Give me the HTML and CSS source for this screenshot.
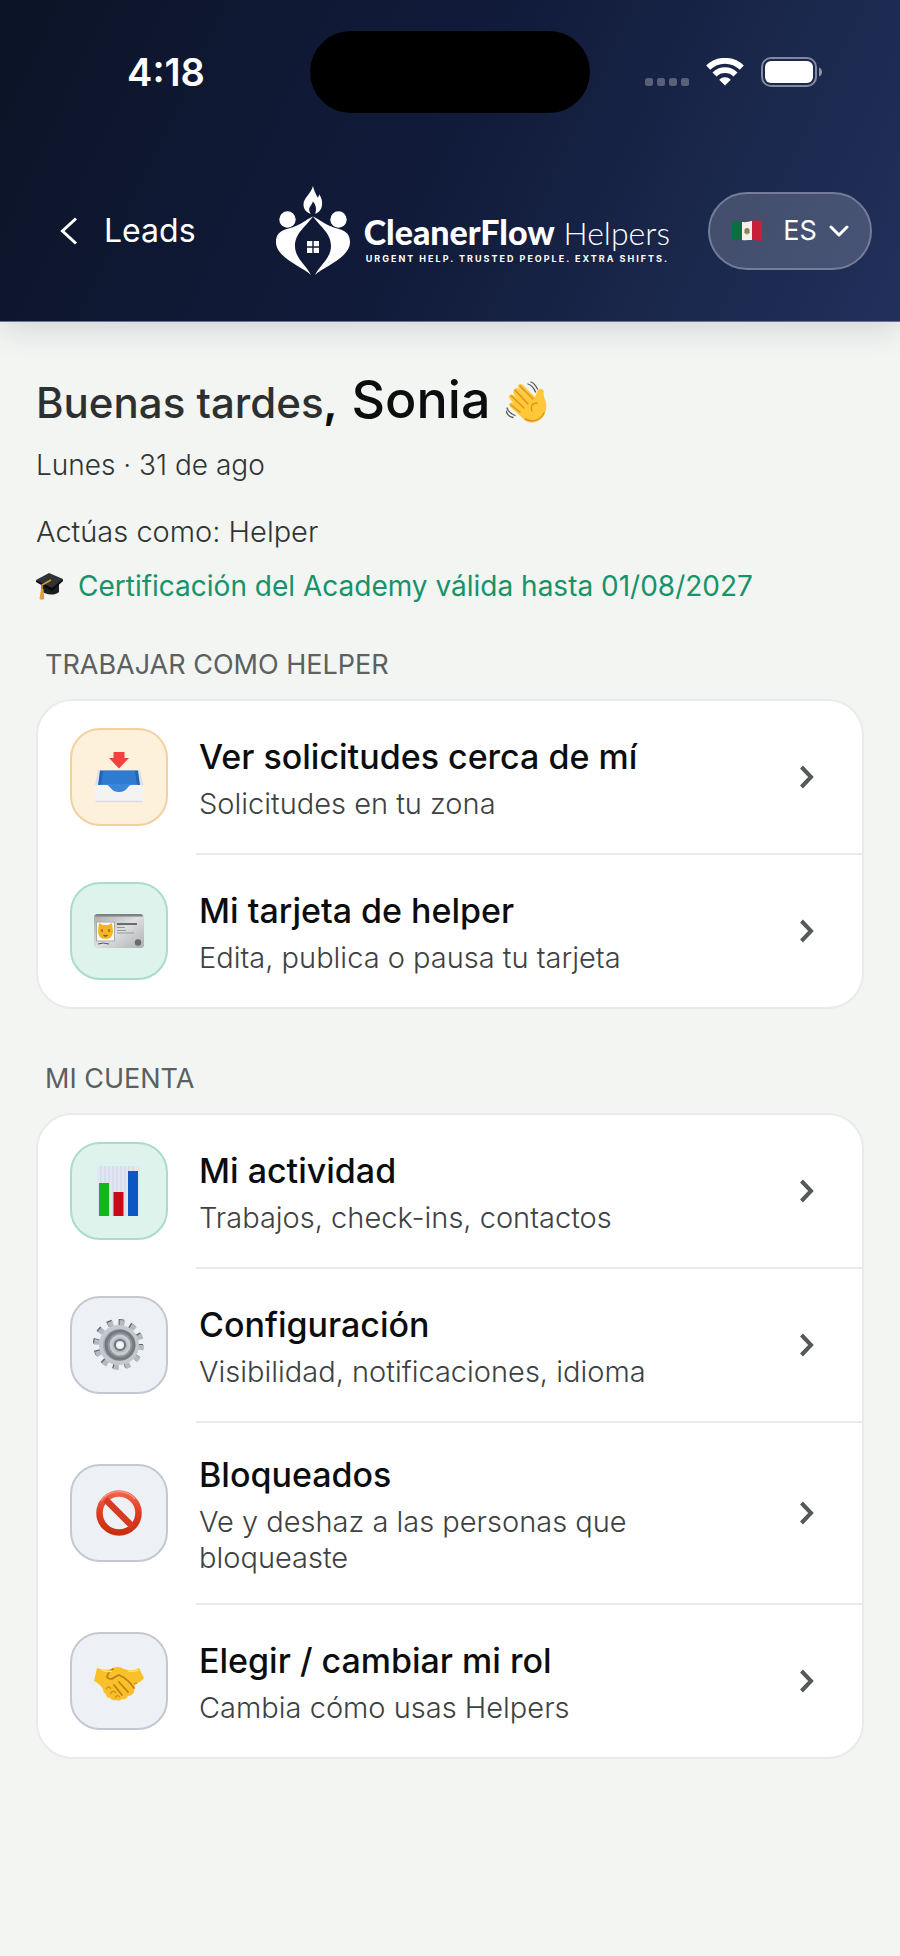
FILE: index.html
```html
<!DOCTYPE html>
<html lang="es">
<head>
<meta charset="utf-8">
<meta name="viewport" content="width=device-width, initial-scale=1">
<title>CleanerFlow Helpers</title>
<link rel="stylesheet" href="styles.css">
</head>
<body>
<header class="header">
  <div class="status">
    <span class="status-time">4:18</span>
    <span class="island"></span>
    <div class="status-icons">
      <svg class="signal" width="44" height="28" viewBox="0 0 44 28" aria-hidden="true"><g fill="#fff" opacity=".28"><rect x="0" y="20" width="8" height="8" rx="2.5"/><rect x="12" y="20" width="8" height="8" rx="2.5"/><rect x="24" y="20" width="8" height="8" rx="2.5"/><rect x="36" y="20" width="8" height="8" rx="2.5"/></g></svg>
      <svg class="wifi" width="38" height="28" viewBox="0 0 38 28" aria-hidden="true"><g fill="none" stroke="#fff" stroke-width="5.8"><path d="M2.2 9.600a24 24 0 0 1 33.600 0"/><path d="M8.500 16.500a15 15 0 0 1 21 0"/></g><path d="M19 27.500l-5.800-5.800a8.300 8.300 0 0 1 11.600 0z" fill="#fff"/></svg>
      <svg class="battery" width="62" height="30" viewBox="0 0 62 30" aria-hidden="true"><rect x="1" y="1" width="54" height="28" rx="9" fill="none" stroke="#fff" stroke-opacity=".45" stroke-width="2"/><rect x="4" y="4" width="48" height="22" rx="6" fill="#fff"/><path d="M58 10.500c4 1.500 4 7.500 0 9z" fill="#fff" opacity=".5"/></svg>
    </div>
  </div>
  <nav class="nav">
    <a class="back" href="#leads">
      <svg width="18" height="28" viewBox="0 0 18 28" aria-hidden="true"><path d="M16 1.500L2.500 14 16 26.500" fill="none" stroke="#fff" stroke-width="3"/></svg>
      <span>Leads</span>
    </a>
    <a class="brand" href="#inicio">
      <svg class="brand-mark" width="74" height="90" viewBox="0 0 74 90" aria-hidden="true">
        <g fill="#fff">
          <path fill-rule="evenodd" d="M37 0c1 5 3 8 4.500 11.500 1-.8 1.600-2 1.800-3.300 2.200 3.500 3.200 7 2.700 11-.5 4.300-3 7.300-6.800 8.700 1.500-4.500 1-9-2.400-12.600-.3 3.500-3.600 5-3.600 8.300 0 1.700.6 3 1.600 4.300-4.400-1.300-7.300-4.600-7.300-9.300 0-7 7.500-10.500 9.500-18.600z"/>
          <circle cx="11.500" cy="33.500" r="8.200"/><circle cx="62.500" cy="33.500" r="8.200"/>
          <path d="M37 30.500C30 40.500 19 47 19 60c0 12 11 19 16 29C27 81 0 72 0 56 0 43 12 43.500 20 40 27 37 33 32 37 30.500z"/>
          <path d="M37 30.500C44 40.500 55 47 55 60c0 12-11 19-16 29C47 81 74 72 74 56 74 43 62 43.500 54 40 47 37 41 32 37 30.500z"/>
          <path d="M31 55h5.300v5.300H31zM37.700 55H43v5.300h-5.300zM31 61.700h5.300V67H31zM37.700 61.700H43V67h-5.300z"/>
        </g>
      </svg>
      <span class="brand-copy">
        <span class="brand-name"><strong>CleanerFlow</strong> Helpers</span>
        <span class="brand-tag">URGENT HELP. TRUSTED PEOPLE. EXTRA SHIFTS.</span>
      </span>
    </a>
    <button class="lang" type="button" aria-haspopup="listbox" aria-label="Idioma: ES">
      <svg width="32" height="24" viewBox="0 0 32 24" aria-hidden="true"><path d="M1 3c4-2 7 0 10 0v18c-3 0-6-1-10 1z" fill="#08703f"/><path d="M11 3c4 .5 7-.5 10-1v19c-3 0-6 .5-10 0z" fill="#f2f1ee"/><path d="M21 2c4-1 7 0 10 0v20c-3 0-6-1.500-10-1z" fill="#c91f3a"/><circle cx="16" cy="11.500" r="2.600" fill="#9b7b48"/><path d="M13.500 13c1 2.500 4 2.500 5 0" stroke="#53835a" fill="none"/></svg>
      <span>ES</span>
      <svg class="caret" width="20" height="14" viewBox="0 0 20 14" aria-hidden="true"><path d="M2 3l8 8 8-8" fill="none" stroke="#fff" stroke-width="3" stroke-linecap="round" stroke-linejoin="round"/></svg>
    </button>
  </nav>
</header>

<main class="main">
  <h1 class="greeting">
    <span class="hello">Buenas tardes<b>,</b></span>
    <span class="name">Sonia</span>
    <svg width="42" height="42" viewBox="0 0 42 42" aria-hidden="true">
      <path d="M9 8c2-2 4-.5 5 .7l6 6.300-7.500-8.500c-1.500-2.500 1.500-5 4-2.700L29 16c1.500-1 .8-3.800 2.500-6.500 2-3 6.500-1.500 6.200 1.500-.3 2.500.3 5 1.800 9 2.500 8-1 17-8.500 20.500-6 2.500-10 .5-13.500-2.500L4.500 26c-3-3 0-6 3-3.800L4 18c-2.500-3 .5-6.300 3.500-4L10 16 8 13c-1.800-2-.5-4 1-5z" fill="#ffc73a"/>
      <path d="M9 9l13 14M14 5l13 13M5.500 15L18 27M5 24l9 7M31 22c-5 0-7 4-5 8M19 38c8 4 16 1 19-6" fill="none" stroke="#dd9418" stroke-width="1.400" stroke-linecap="round"/>
      <path d="M22 3c3 1 6 4 7.500 8M25 1c3 1 5 4 6.500 7M1 27c1 3 4 6 8 7.500M0 30c1 3 4 6 7 6.500" fill="none" stroke="#555" stroke-width="1.300" stroke-linecap="round"/>
    </svg>
  </h1>
  <p class="meta">Lunes · 31 de ago</p>
  <p class="meta role">Actúas como: Helper</p>
  <p class="cert">
    <svg width="28" height="30" viewBox="0 0 28 30" aria-hidden="true"><path d="M5 12v8c5 4 13 5 18 1v-9z" fill="#1c1e20"/><path d="M0 9L13 2l14 6-11 11z" fill="#303336"/><path d="M0 9l16 8 11-9v2L16 20 0 11z" fill="#090a0b"/><path d="M15 9l-9 5v8" fill="none" stroke="#d8952d" stroke-width="1.600"/><path d="M5 18h2.500l.8 10c-1.500 1-3.500 1-4.800 0z" fill="#e0a03a"/></svg>
    <span>Certificación del Academy válida hasta 01/08/2027</span>
  </p>

  <section class="group">
    <h2 class="label">TRABAJAR COMO HELPER</h2>
    <div class="card">
      <a class="row" href="#solicitudes">
        <span class="tile amber"><svg width="52" height="52" viewBox="0 0 52 52" aria-hidden="true"><path d="M20.500 1h11v6H36L26 17.500 16 7h4.500z" fill="#f5413d"/><path d="M5 19h42l3 15H2z" fill="#dcdfe4"/><path d="M7 19.500h38l2 15H5z" fill="#2163b5"/><path d="M10 20h32l2 13H8z" fill="#2f7bd0"/><path d="M7 33h38l-8 10H14z" fill="#3a86d8"/><path d="M1.500 34h12c4 0 4 7 12.500 7s8.500-7 12.500-7h12l-1 16.500H2.500z" fill="#f3f3f4"/><path d="M2.500 50.500h47" stroke="#dcdcdf" stroke-width="1.500"/></svg></span>
        <span class="copy"><span class="title">Ver solicitudes cerca de mí</span><span class="sub">Solicitudes en tu zona</span></span>
        <svg class="go" width="14" height="24" viewBox="0 0 14 24" aria-hidden="true"><path d="M1.500 2L11 12l-9.500 10"/></svg>
      </a>
      <a class="row" href="#tarjeta">
        <span class="tile mint"><svg width="52" height="52" viewBox="0 0 52 52" aria-hidden="true"><defs><linearGradient id="metal" x1="0" y1="0" x2="1" y2="1"><stop offset="0" stop-color="#a9aaac"/><stop offset=".5" stop-color="#dedfe0"/><stop offset="1" stop-color="#aeb0b1"/></linearGradient></defs><rect x="1" y="9" width="50" height="34" rx="3" fill="url(#metal)"/><path d="M2 11.500q0-2.500 2.500-2.500h43q2.500 0 2.500 2.500z" fill="#7e8082"/><rect x="3.500" y="17" width="18" height="19" fill="#fafafa" stroke="#aaa"/><path d="M6 18l4 2h5l4-2 1 8c0 5-3 8-7.500 8S5 31 5 26z" fill="#f3b620"/><path d="M9 24v3m7-3v3M10.500 30q2 2 4 0" stroke="#8d5a18" stroke-width="1.300" fill="none"/><path d="M24 19h20" stroke="#444" stroke-width="1.600"/><path d="M24 22.500h8m-8 3h9m-9 2.500h17" stroke="#96989a" stroke-width="1"/><path d="M5 39q5-2 11 0" stroke="#555" fill="none"/><circle cx="45" cy="37.500" r="3.200" fill="#67696c"/></svg></span>
        <span class="copy"><span class="title">Mi tarjeta de helper</span><span class="sub">Edita, publica o pausa tu tarjeta</span></span>
        <svg class="go" width="14" height="24" viewBox="0 0 14 24" aria-hidden="true"><path d="M1.500 2L11 12l-9.500 10"/></svg>
      </a>
    </div>
  </section>

  <section class="group">
    <h2 class="label">MI CUENTA</h2>
    <div class="card">
      <a class="row" href="#actividad">
        <span class="tile mint"><svg width="52" height="52" viewBox="0 0 52 52" aria-hidden="true"><rect x="4" y="1" width="43" height="50" fill="#e2e7f3"/><path d="M8 1v50m4-50v50m4-50v50m4-50v50m4-50v50m4-50v50m4-50v50m4-50v50m4-50v50" stroke="#cbd3e4" stroke-width="1"/><path d="M6 18h10v33H6z" fill="#12b51b"/><path d="M20.500 27h10v24h-10z" fill="#c80b12"/><path d="M35 6h10v45H35z" fill="#0d57c4"/></svg></span>
        <span class="copy"><span class="title">Mi actividad</span><span class="sub">Trabajos, check-ins, contactos</span></span>
        <svg class="go" width="14" height="24" viewBox="0 0 14 24" aria-hidden="true"><path d="M1.500 2L11 12l-9.500 10"/></svg>
      </a>
      <a class="row" href="#configuracion">
        <span class="tile slate"><svg width="52" height="52" viewBox="0 0 52 52" aria-hidden="true"><circle cx="25" cy="25" r="22" fill="none" stroke="#5d646b" stroke-width="6" stroke-dasharray="5 6.520"/><circle cx="26" cy="26" r="22" fill="none" stroke="#b3bac1" stroke-width="6" stroke-dasharray="5 6.520"/><circle cx="26" cy="26" r="18" fill="#a5acb2" stroke="#c4c9cd" stroke-width="4"/><circle cx="27" cy="26" r="14" fill="#8f969c" stroke="#737a80" stroke-width="3"/><circle cx="27" cy="26" r="9" fill="#b0b6bb" stroke="#c8cdd1" stroke-width="3"/><circle cx="27" cy="26" r="5" fill="#edf0f2" stroke="#6f757a" stroke-width="2"/><circle cx="27" cy="26" r="2" fill="#fff"/></svg></span>
        <span class="copy"><span class="title">Configuración</span><span class="sub">Visibilidad, notificaciones, idioma</span></span>
        <svg class="go" width="14" height="24" viewBox="0 0 14 24" aria-hidden="true"><path d="M1.500 2L11 12l-9.500 10"/></svg>
      </a>
      <a class="row" href="#bloqueados">
        <span class="tile slate"><svg width="52" height="52" viewBox="0 0 52 52" aria-hidden="true"><defs><linearGradient id="stop" x1="0" y1="0" x2="0" y2="1"><stop offset="0" stop-color="#f2614a"/><stop offset=".5" stop-color="#df3a22"/><stop offset="1" stop-color="#c93012"/></linearGradient></defs><circle cx="26" cy="26" r="19.500" fill="none" stroke="url(#stop)" stroke-width="6.500"/><path d="M12.500 12.500l27 27" stroke="#d83b23" stroke-width="6.500"/><path d="M8 14C15 3 33 1 42 12" fill="none" stroke="#ff9b83" stroke-width="1.200"/></svg></span>
        <span class="copy"><span class="title">Bloqueados</span><span class="sub">Ve y deshaz a las personas que bloqueaste</span></span>
        <svg class="go" width="14" height="24" viewBox="0 0 14 24" aria-hidden="true"><path d="M1.500 2L11 12l-9.500 10"/></svg>
      </a>
      <a class="row" href="#rol">
        <span class="tile slate"><svg width="52" height="52" viewBox="0 0 52 52" aria-hidden="true"><path d="M4 13q8 3 14 1 6-4 13 0 8 3 15-1l5 10q-3 4-9 6l-1 8q-2 4-6 4-2 4-6 3-3 3-6 1-4 1-6-2-4 0-4-4-3-1-3-5-4-6-9-8z" fill="#f8c12b"/><path d="M20 14q-5 3-6 8 3 4 8 0l4-2q9 4 15 13M26 27l9 10m-14-7l8 10" fill="none" stroke="#c27e10" stroke-width="1.700" stroke-linecap="round"/><path d="M13 34q3-4 5 0m-1 5q3-5 6-1m-1 5q2-4 5-1M41 29l3-1" fill="none" stroke="#d7911b" stroke-width="1.500"/><path d="M8 14.500q6 3 11 1.500M35 16q6 1 10-1" stroke="#ffe36b" stroke-width="1.500" fill="none"/></svg></span>
        <span class="copy"><span class="title">Elegir / cambiar mi rol</span><span class="sub">Cambia cómo usas Helpers</span></span>
        <svg class="go" width="14" height="24" viewBox="0 0 14 24" aria-hidden="true"><path d="M1.500 2L11 12l-9.500 10"/></svg>
      </a>
    </div>
  </section>
</main>
</body>
</html>
```

FILE: styles.css
```css
* { box-sizing: border-box; }
body {
  margin: 0;
  min-height: 100vh;
  background: #f3f5f3;
  color: #0b0d0e;
  font-family: Inter, "Liberation Sans", sans-serif;
}
a { color: inherit; text-decoration: none; }
svg { display: block; flex: none; }
h1, h2, p { margin: 0; font-weight: 400; }

.header {
  padding: 31px 0 45px;
  background: linear-gradient(115deg, #0b1426 0%, #0f1832 25%, #111b3a 50%, #1a274b 75%, #21305b 100%);
  border-bottom: 1px solid #6b7392;
  box-shadow: 0 4px 32px rgba(15, 24, 40, .16);
  color: #fff;
}
.status {
  display: grid;
  grid-template-columns: 1fr 280px 1fr;
  align-items: center;
  justify-items: center;
  padding: 0 22px;
}
.status-time { font-size: 38px; font-weight: 600; line-height: 44px; }
.island { width: 280px; height: 82px; border-radius: 41px; background: #000; }
.status-icons { display: flex; align-items: center; gap: 17px; }

.nav {
  display: flex;
  align-items: center;
  gap: 38px;
  margin-top: 73px;
  padding: 0 28px 0 60px;
}
.back { display: flex; align-items: center; gap: 26px; font-size: 32px; line-height: 40px; }
.brand { display: flex; align-items: center; gap: 14px; margin-left: auto; }
.brand-copy { display: flex; flex-direction: column; padding-top: 14px; white-space: nowrap; }
.brand-name { font-family: Lato, sans-serif; font-size: 32px; font-weight: 300; line-height: 40px; }
.brand-name strong { font-size: 34px; font-weight: 900; }
.brand-tag { font-size: 9px; font-weight: 700; line-height: 12px; letter-spacing: 2px; padding-left: 2px; }
.lang {
  display: flex;
  align-items: center;
  justify-content: center;
  width: 164px;
  height: 78px;
  padding: 0;
  border: 2px solid #747c99;
  border-radius: 39px;
  background: rgba(255, 255, 255, .18);
  color: #fff;
  font: 400 27px/36px Inter, sans-serif;
  gap: 20px;
}
.caret { margin-left: -8px; }

.main { padding: 44px 36px 48px; }
.greeting { display: flex; align-items: baseline; line-height: 68px; }
.hello { font-size: 42px; font-weight: 500; color: #2d3030; }
.hello b { font-weight: 700; color: #0b0d0e; }
.name { margin-left: 14px; font-size: 52px; font-weight: 500; }
.greeting svg { margin-left: 16px; align-self: center; }
.meta { margin-top: 10px; font-size: 28px; font-weight: 300; line-height: 36px; color: #303434; }
.role { margin-top: 31px; font-size: 29px; }
.cert {
  display: flex;
  align-items: center;
  gap: 14px;
  margin-top: 18px;
  font-size: 28px;
  line-height: 36px;
  color: #16936a;
}

.group { margin-top: 43px; }
.label { padding-left: 9px; font-size: 27px; line-height: 36px; color: #5b6060; }
.group + .group { margin-top: 52px; }
.card {
  margin-top: 16px;
  border: 2px solid #e9ebea;
  border-radius: 36px;
  background: #fff;
  overflow: hidden;
}
.row {
  display: flex;
  align-items: center;
  padding: 27px 48px 27px 32px;
}
.row + .row {
  background: linear-gradient(#e9ebea, #e9ebea) no-repeat 158px 0 / 100% 2px;
  padding-top: 29px;
}
.tile {
  display: grid;
  place-items: center;
  flex: none;
  width: 98px;
  height: 98px;
  border: 2px solid;
  border-radius: 30px;
}
.amber { background: #fdf1dc; border-color: #f3d0a0; }
.mint { background: #def3eb; border-color: #a9dccb; }
.slate { background: #edf0f4; border-color: #c5c8d1; }
.copy { display: flex; flex: 1; min-width: 0; flex-direction: column; gap: 4px; margin: 0 120px 0 31px; }
.title { font-size: 34px; font-weight: 500; line-height: 50px; white-space: nowrap; }
.sub { font-size: 29px; font-weight: 300; line-height: 36px; color: #3d4141; }
.go { fill: none; stroke: #555959; stroke-width: 4; }
```
